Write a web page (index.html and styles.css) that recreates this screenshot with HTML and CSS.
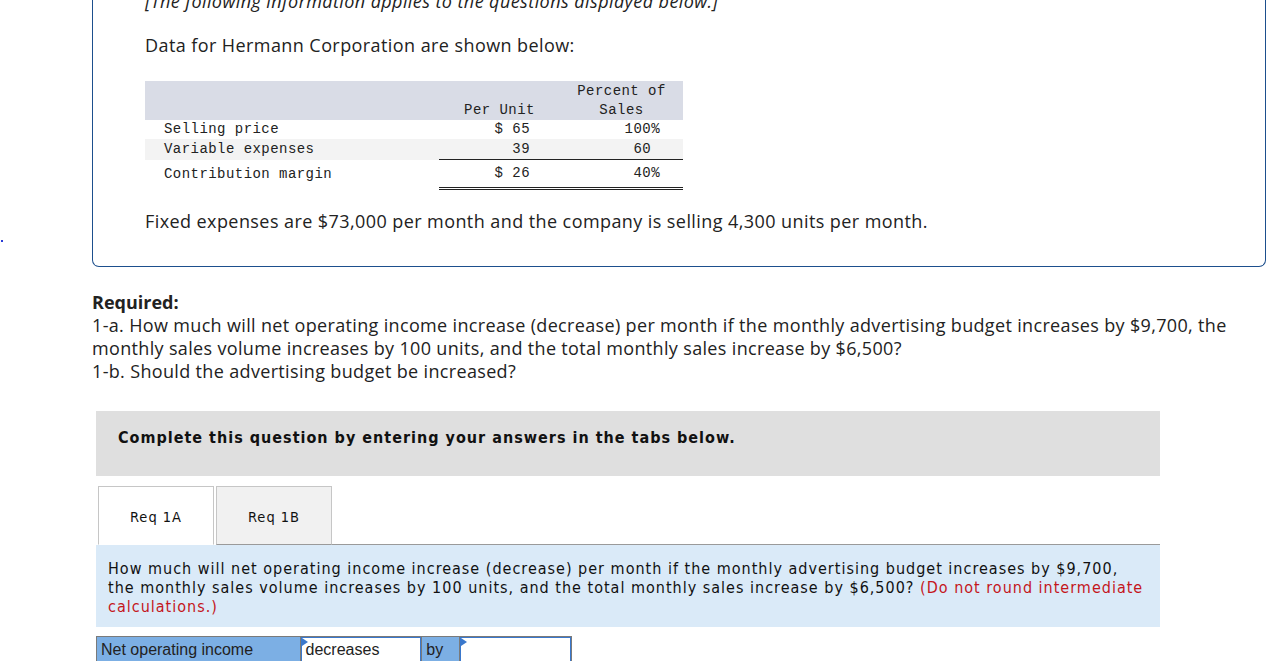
FILE: index.html
```html
<!DOCTYPE html>
<html>
<head>
<meta charset="utf-8">
<link rel="stylesheet" href="styles.css">
</head>
<body>
<div class="page">
  <div class="top">
    <div class="gutter"><span class="dot"></span></div>
    <div class="box">
      <p class="intro">[The following information applies to the questions displayed below.]</p>
      <p class="lead">Data for Hermann Corporation are shown below:</p>
      <table class="fin">
        <thead>
          <tr>
            <th class="lbl"></th>
            <th class="num">Per Unit</th>
            <th class="pct">Percent of<br>Sales</th>
          </tr>
        </thead>
        <tbody>
          <tr>
            <td class="lbl">Selling price</td>
            <td class="num r1">$ 65</td>
            <td class="pct r1">100%</td>
          </tr>
          <tr class="alt">
            <td class="lbl">Variable expenses</td>
            <td class="num r1 under">39</td>
            <td class="pct r1 under">60&nbsp;</td>
          </tr>
          <tr class="cm">
            <td class="lbl">Contribution margin</td>
            <td class="num r1 dbl">$ 26</td>
            <td class="pct r1 dbl">40%</td>
          </tr>
        </tbody>
      </table>
      <p class="lead fixed">Fixed expenses are $73,000 per month and the company is selling 4,300 units per month.</p>
    </div>
  </div>

  <div class="required">
    <p class="req-title">Required:</p>
    <p>1-a. How much will net operating income increase (decrease) per month if the monthly advertising budget increases by $9,700, the<br>monthly sales volume increases by 100 units, and the total monthly sales increase by $6,500?</p>
    <p>1-b. Should the advertising budget be increased?</p>
  </div>

  <div class="banner">Complete this question by entering your answers in the tabs below.</div>

  <div class="tabs">
    <div class="tab active">Req 1A</div>
    <div class="tab">Req 1B</div>
    <div class="tabfill"></div>
  </div>
  <div class="panel">How much will net operating income increase (decrease) per month if the monthly advertising budget increases by $9,700,<br>the monthly sales volume increases by 100 units, and the total monthly sales increase by $6,500? <span class="red">(Do not round intermediate<br>calculations.)</span></div>

  <div class="answer">
    <div class="cell label">Net operating income</div>
    <div class="cell input w1"><span class="tri"></span>decreases</div>
    <div class="cell by">by</div>
    <div class="cell input w2"><span class="tri"></span></div>
  </div>
</div>
</body>
</html>
```

FILE: styles.css
```css
html, body {
  margin: 0;
  padding: 0;
  background: #fff;
}
body {
  font-family: "Open Sans", "Liberation Sans", sans-serif;
  color: #222;
  overflow: hidden;
}
p { margin: 0; }

.page {
  margin-top: -36px;
}

.top {
  display: flex;
}
.gutter {
  width: 92px;
  display: flex;
  align-items: flex-end;
}
.dot {
  display: block;
  width: 2px;
  height: 2px;
  background: #2a3bd6;
  margin: 0 0 25px 1px;
}
.box {
  width: 1174px;
  border: 1.5px solid #1d4f8d;
  border-top: none;
  border-radius: 0 0 7px 7px;
  padding: 26px 0 33px 52px;
  box-sizing: border-box;
  font-size: 18px;
  letter-spacing: 0.42px;
  line-height: 23px;
}
.intro {
  font-style: italic;
}
.lead {
  margin-top: 21px;
}
.fixed {
  margin-top: 20px;
}

.fin {
  margin-top: 24px;
  border-collapse: collapse;
  font-family: "Liberation Mono", monospace;
  font-size: 14px;
  letter-spacing: 0.45px;
  color: #222;
}
.fin th {
  background: #d9dce6;
  font-weight: normal;
  line-height: 19px;
  height: 39px;
  vertical-align: bottom;
  padding: 0;
}
.fin td {
  padding: 0;
  height: 19px;
  line-height: 19px;
}
.fin .lbl {
  width: 275px;
  padding-left: 19px;
  text-align: left;
}
.fin th.num { width: 121px; text-align: center; }
.fin th.pct { width: 123px; text-align: center; }
.fin td.num { text-align: right; padding-right: 30px; width: 91px; }
.fin td.pct { text-align: right; padding-right: 23px; width: 100px; }
.fin tr.alt td { background: #f3f3f3; height: 20px; }
.fin td.under { border-bottom: 1.5px solid #222; }
.fin tr.cm td { height: 27px; }
.fin td.dbl { border-bottom: 3px double #222; }

.required {
  margin: 24px 0 0 92px;
  font-size: 18px;
  letter-spacing: 0.34px;
  line-height: 23px;
  color: #222;
}
.req-title { font-weight: bold; letter-spacing: 0; }

.banner {
  margin: 28px 0 0 96px;
  width: 1064px;
  height: 65px;
  box-sizing: border-box;
  background: #dfdfdf;
  padding: 17px 22px 0;
  font-family: "DejaVu Sans Condensed", "DejaVu Sans", sans-serif;
  font-weight: bold;
  font-size: 16px;
  letter-spacing: 1px;
  line-height: 20px;
  color: #111;
}

.tabs {
  display: flex;
  margin: 10px 0 0 96px;
  width: 1064px;
  align-items: flex-end;
  font-family: "DejaVu Sans Condensed", "DejaVu Sans", sans-serif;
  font-size: 14.5px;
  letter-spacing: 1px;
  color: #111;
}
.tab {
  height: 59px;
  line-height: 60px;
  box-sizing: border-box;
  width: 116px;
  text-align: center;
  border: 1px solid #c6c6c6;
  border-bottom: 1px solid #9a9a9a;
  background: #f1f1f1;
  margin-left: 2px;
}
.tab.active {
  background: #fff;
  border-bottom: 1px solid #fff;
}
.tabfill {
  flex: 1;
  border-bottom: 1px solid #9a9a9a;
}

.panel {
  margin-left: 96px;
  width: 1064px;
  box-sizing: border-box;
  background: #daeaf8;
  padding: 14px 8px 0 12px;
  height: 82px;
  font-family: "DejaVu Sans Condensed", "DejaVu Sans", sans-serif;
  font-size: 16px;
  letter-spacing: 1px;
  line-height: 19px;
  color: #111;
  white-space: nowrap;
}
.red { color: #c4161c; }

.answer {
  display: flex;
  margin: 9px 0 0 96px;
  width: 476px;
  height: 30px;
  box-sizing: border-box;
  border: 1px solid #7a7a7a;
  background: #7cafe4;
  font-family: "Liberation Sans", Arial, sans-serif;
  font-size: 16px;
  color: #222;
}
.cell {
  position: relative;
  box-sizing: border-box;
  padding: 4px 0 0 4px;
}
.label { width: 204px; border-right: 1px solid #7a7a7a; }
.input {
  background: #fff;
  border: 1px solid #3a78cc;
  border-bottom: none;
  padding-top: 3px;
}
.w1 { width: 121px; }
.by { width: 39px; border-left: 1px solid #7a7a7a; border-right: 1px solid #7a7a7a; }
.w2 { width: 111px; }
.tri {
  position: absolute;
  left: 0;
  top: 0;
  width: 0;
  height: 0;
  border-top: 4px solid transparent;
  border-bottom: 4px solid transparent;
  border-left: 6px solid #3a78cc;
}
```
